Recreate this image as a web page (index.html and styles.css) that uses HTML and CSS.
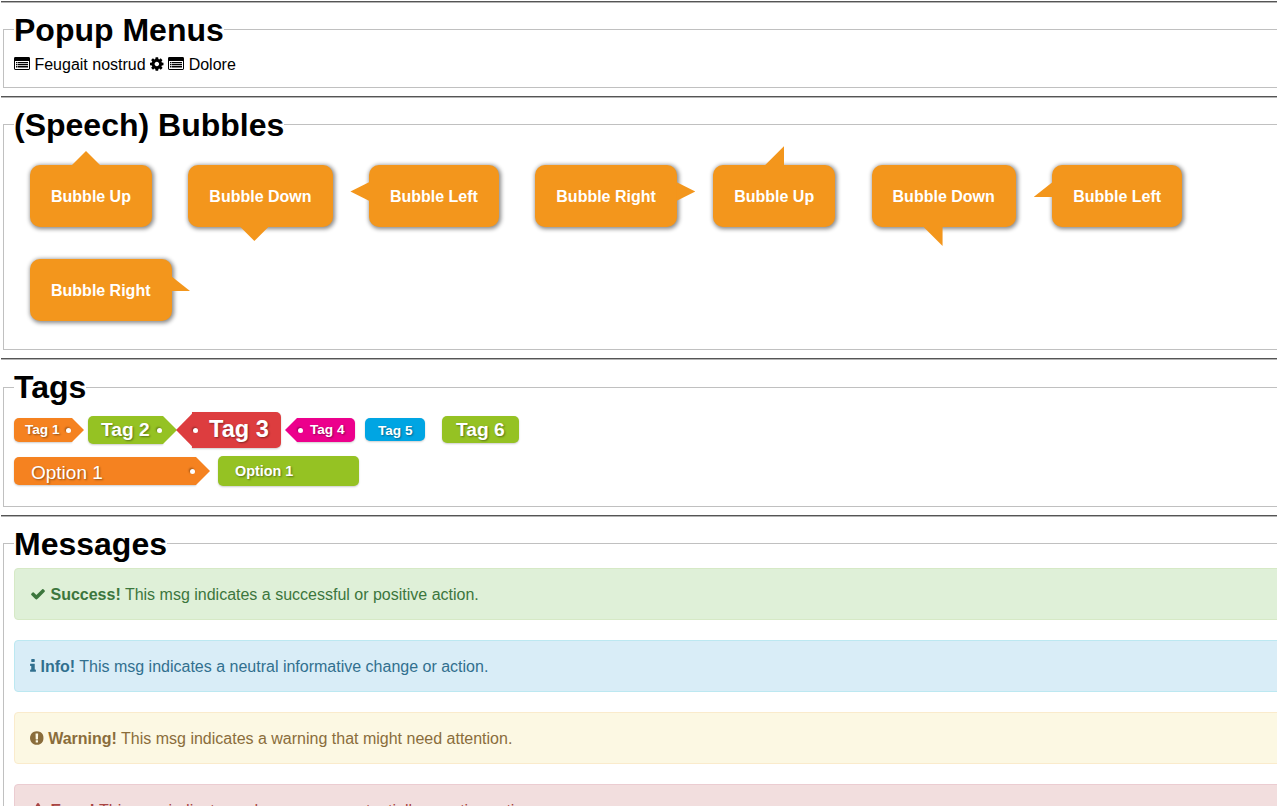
FILE: index.html
```
<!DOCTYPE html>
<html lang="en">
<head>
<meta charset="utf-8">
<title>Components</title>
<link rel="stylesheet" href="styles.css">
</head>
<body>
<svg class="defs" width="0" height="0">
  <symbol id="list" viewBox="0 0 16 14"><path fill-rule="evenodd" d="M1.400 0h13.200q1.400 0 1.400 1.400v10.200q0 1.400-1.400 1.400h-13.200q-1.400 0-1.400-1.400v-10.200q0-1.400 1.400-1.400zM1 4v7.500q0 .500.500.500h13q.500 0 .500-.500v-7.500zM2 5h1.500v1.200h-1.500zM4 5h10v1.200h-10zM2 7h1.500v1.200h-1.500zM4 7h10v1.200h-10zM2 9h1.500v1.400h-1.500zM4 9h10v1.400h-10z"/></symbol>
  <symbol id="cog" viewBox="0 0 1536 1536"><path d="M1024 768q0-106-75-181t-181-75-181 75-75 181 75 181 181 75 181-75 75-181zm512-109v222q0 12-8 23t-20 13l-185 28q-19 54-39 91 35 50 107 138 10 12 10 25t-9 23q-27 37-99 108t-94 71q-12 0-26-9l-138-108q-44 23-91 38-16 136-29 186-7 28-36 28h-222q-14 0-24.500-8.500t-11.500-21.500l-28-184q-49-16-90-37l-141 107q-10 9-25 9-14 0-25-11-126-114-165-168-7-10-7-23 0-12 8-23 15-21 51-66.500t54-70.500q-27-50-41-99l-183-27q-13-2-21-12.500t-8-23.500v-222q0-12 8-23t19-13l186-28q14-46 39-92-40-57-107-138-10-12-10-24 0-10 9-23 26-36 98.500-107.500t94.500-71.500q13 0 26 10l138 107q44-23 91-38 16-136 29-186 7-28 36-28h222q14 0 24.500 8.500t11.500 21.500l28 184q49 16 90 37l142-107q9-9 24-9 13 0 25 10 129 119 165 170 7 8 7 22 0 12-8 23-15 21-51 66.500t-54 70.500q26 50 41 98l183 28q13 2 21 12.500t8 23.500z"/></symbol>
  <symbol id="check" viewBox="0 128 1792 1536"><path d="M1671 566q0 40-28 68l-724 724-136 136q-28 28-68 28t-68-28l-136-136-362-362q-28-28-28-68t28-68l136-136q28-28 68-28t68 28l294 295 656-657q28-28 68-28t68 28l136 136q28 28 28 68z"/></symbol>
  <symbol id="info" viewBox="576 128 640 1536"><path d="M1216 1344v128q0 26-19 45t-45 19h-512q-26 0-45-19t-19-45v-128q0-26 19-45t45-19h64v-384h-64q-26 0-45-19t-19-45v-128q0-26 19-45t45-19h384q26 0 45 19t19 45v576h64q26 0 45 19t19 45zm-128-1152v192q0 26-19 45t-45 19h-256q-26 0-45-19t-19-45v-192q0-26 19-45t45-19h256q26 0 45 19t19 45z"/></symbol>
  <symbol id="warn" viewBox="128 128 1536 1536"><path d="M896 128q209 0 385.500 103t279.500 279.500 103 385.500-103 385.500-279.500 279.500-385.500 103-385.500-103-279.500-279.500-103-385.500 103-385.500 279.500-279.500 385.500-103zm128 1247v-190q0-14-9-23.500t-22-9.500h-192q-13 0-23 10t-10 23v190q0 13 10 23t23 10h192q13 0 22-9.500t9-23.500zm-2-344l18-621q0-12-10-18-10-8-24-8h-220q-14 0-24 8-10 6-10 18l17 621q0 10 10 17.500t24 7.500h185q14 0 23.500-7.500t10.500-17.500z"/></symbol>
  <symbol id="error" viewBox="0 0 16 14"><path fill-rule="evenodd" d="M8 0q.700 0 1 .600l6.800 11.800q.700 1.500-1 1.600h-13.600q-1.700-.100-1-1.600l6.800-11.800q.300-.600 1-.600zM6.800 4.500l.300 5h1.800l.300-5zM7 10.300v1.700h2v-1.700z"/></symbol>
</svg>
<hr>
<fieldset class="menus">
  <legend>Popup Menus</legend>
  <div class="menu-line"><svg class="icon wide"><use href="#list"/></svg> Feugait nostrud <svg class="icon"><use href="#cog"/></svg> <svg class="icon wide"><use href="#list"/></svg> Dolore</div>
</fieldset>
<hr>
<fieldset class="bubbles">
  <legend>(Speech) Bubbles</legend>
  <div class="bubble-list">
    <span class="bubble up">Bubble Up</span>
    <span class="bubble down">Bubble Down</span>
    <span class="bubble left">Bubble Left</span>
    <span class="bubble right">Bubble Right</span>
    <span class="bubble up skew">Bubble Up</span>
    <span class="bubble down skew">Bubble Down</span>
    <span class="bubble left skew">Bubble Left</span>
    <span class="bubble right skew">Bubble Right</span>
  </div>
</fieldset>
<hr>
<fieldset class="tags">
  <legend>Tags</legend>
  <div class="tag-row">
    <span class="tag t1 point-right">Tag 1</span>
    <span class="tag t2 point-right">Tag 2</span>
    <span class="tag t3 point-left">Tag 3</span>
    <span class="tag t4 point-left">Tag 4</span>
    <span class="tag t5">Tag 5</span>
    <span class="tag t6">Tag 6</span>
  </div>
  <div class="tag-row options">
    <span class="tag o1 point-right">Option 1</span>
    <span class="tag o2">Option 1</span>
  </div>
</fieldset>
<hr>
<fieldset class="messages">
  <legend>Messages</legend>
  <div class="msg success"><svg class="icon wide"><use href="#check"/></svg> <strong>Success!</strong> This msg indicates a successful or positive action.</div>
  <div class="msg info"><svg class="icon thin"><use href="#info"/></svg> <strong>Info!</strong> This msg indicates a neutral informative change or action.</div>
  <div class="msg warning"><svg class="icon"><use href="#warn"/></svg> <strong>Warning!</strong> This msg indicates a warning that might need attention.</div>
  <div class="msg error"><svg class="icon wide"><use href="#error"/></svg> <strong>Error!</strong> This msg indicates a dangerous or potentially negative action.</div>
</fieldset>
</body>
</html>
```
FILE: styles.css
```
* { box-sizing: border-box; }
html { height: 100%; overflow: hidden; }
body {
  margin: 0 -20px 0 1px;
  padding-top: 1px;
  height: 806px;
  overflow: hidden;
  background: #fff;
  color: #000;
  font: 16px/18px "Liberation Sans", Arial, sans-serif;
}
.defs { display: none; }
hr {
  height: 2px;
  margin: 0;
  border: 0;
  border-top: 1px solid #555;
  border-bottom: 1px solid #b4b4b4;
}
fieldset {
  min-width: 0;
  margin: 8px 2px;
  padding: 0 10px;
  border: 1px solid #c0c0c0;
}
legend {
  height: 37px;
  padding: 0;
  font-size: 32px;
  font-weight: bold;
  line-height: 39px;
}
.menus { height: 77px; }
.bubbles { height: 244px; }
.tags { height: 139px; }
.tags legend { height: 39px; }
.messages { height: 400px; }

.icon {
  width: 13.7px;
  height: 14px;
  fill: currentColor;
  vertical-align: -1px;
}
.icon.wide { width: 16px; }
.icon.thin { width: 6px; }
.menu-line { padding-top: 8px; }

.bubble-list { padding-top: 6px; width: 1240px; word-spacing: -.04px; }
.bubble {
  position: relative;
  display: inline-block;
  margin: 16px;
  padding: 23px 21px 21px;
  border-radius: 10px;
  background: #f3961c;
  box-shadow: 1px 1px 4px 1px #888;
  color: #fff;
  font-weight: bold;
  vertical-align: top;
}
.bubble::after {
  content: "";
  position: absolute;
  background: #f3961c;
}
.up::after, .down::after { left: 42px; width: 28px; height: 14px; }
.down::after { left: 52px; }
.up::after { bottom: 100%; clip-path: polygon(50% 0, 100% 100%, 0 100%); }
.down::after { top: 100%; clip-path: polygon(0 0, 100% 0, 50% 100%); }
.left::after, .right::after { top: 17px; width: 19px; height: 19px; }
.left::after { right: calc(100% - .5px); clip-path: polygon(0 50%, 100% 0, 100% 100%); }
.right::after { left: calc(100% - .5px); clip-path: polygon(0 0, 100% 50%, 0 100%); }
.skew.up::after, .skew.down::after { width: 19px; height: 19px; }
.skew.up::after { left: 52px; clip-path: polygon(100% 0, 100% 100%, 0 100%); }
.skew.down::after { clip-path: polygon(0 0, 100% 0, 100% 100%); }
.skew.left::after, .skew.right::after { height: 15px; }
.skew.left::after { clip-path: polygon(100% 0, 100% 100%, 0 100%); }
.skew.right::after { clip-path: polygon(0 0, 100% 100%, 0 100%); }

.tag-row { display: flex; align-items: center; height: 36px; margin-top: 5px; }
.tag {
  position: relative;
  border-radius: 5px;
  background: var(--c);
  box-shadow: 0 1px 2px rgba(0, 0, 0, .2);
  color: #fff;
  font-weight: bold;
  text-shadow: 1px 1px 2px rgba(0, 0, 0, .4);
}
.point-right::before, .point-left::before {
  content: "";
  position: absolute;
  top: 0;
  width: var(--w);
  height: 100%;
  background: var(--c);
}
.point-right { border-radius: 5px 0 0 5px; }
.point-left { border-radius: 0 5px 5px 0; }
.point-right::before { left: 100%; clip-path: polygon(0 0, 100% 50%, 0 100%); }
.point-left::before { right: 100%; clip-path: polygon(100% 0, 0 50%, 100% 100%); }
.t3.point-left::before { clip-path: polygon(100% 5%, 0 50%, 100% 95%); }
.point-right::after, .point-left::after {
  content: "";
  position: absolute;
  top: calc(50% - 2px);
  width: 5px;
  height: 5px;
  border-radius: 50%;
  background: #fff;
  box-shadow: -1px -1px 2px rgba(0, 0, 0, .35);
}
.point-right::after { right: 1px; }
.point-left::after { left: 1px; }
.t1 { --c: #f58220; --w: 12px; width: 58px; height: 24px; padding-left: 11px; font-size: 13.6px; line-height: 23px; }
.t2 { --c: #95c223; --w: 14px; width: 75px; height: 28px; margin-left: 16px; padding-left: 13px; font-size: 19.2px; line-height: 27px; }
.t3 { --c: #dd3d3f; --w: 16px; width: 89px; height: 36px; margin-left: 29px; padding-left: 17px; font-size: 23.6px; line-height: 34px; }
.t4 { --c: #ec008c; --w: 12px; width: 58px; height: 24px; margin-left: 16px; padding-left: 13px; font-size: 13.6px; line-height: 23px; }
.t5 { --c: #00a5e3; width: 60px; height: 23px; margin: 0 0 1px 10px; padding-left: 13px; font-size: 13.6px; line-height: 25px; }
.t6 { --c: #95c223; width: 77px; height: 27px; margin: 0 0 1px 17px; padding-left: 14px; font-size: 19.2px; line-height: 27px; }
.options { height: 30px; margin-top: 8px; }
.o1 { --c: #f58220; --w: 14px; width: 182px; height: 28px; padding-left: 17px; font-size: 19px; font-weight: normal; line-height: 31px; }
.o2 { --c: #95c223; width: 141px; height: 30px; margin-left: 22px; padding-left: 17px; font-size: 14.4px; line-height: 30px; }

.msg {
  height: 52px;
  margin-bottom: 20px;
  padding: 17px 15px 15px;
  border: 1px solid;
  border-radius: 4px;
}
.messages legend { margin-bottom: 6px; }
.success { background: #dff0d8; border-color: #d6e9c6; color: #3c763d; }
.info { background: #d9edf7; border-color: #bce8f1; color: #31708f; }
.warning { background: #fcf8e3; border-color: #faebcc; color: #8a6d3b; }
.error { background: #f2dede; border-color: #ebccd1; color: #a94442; }
```
